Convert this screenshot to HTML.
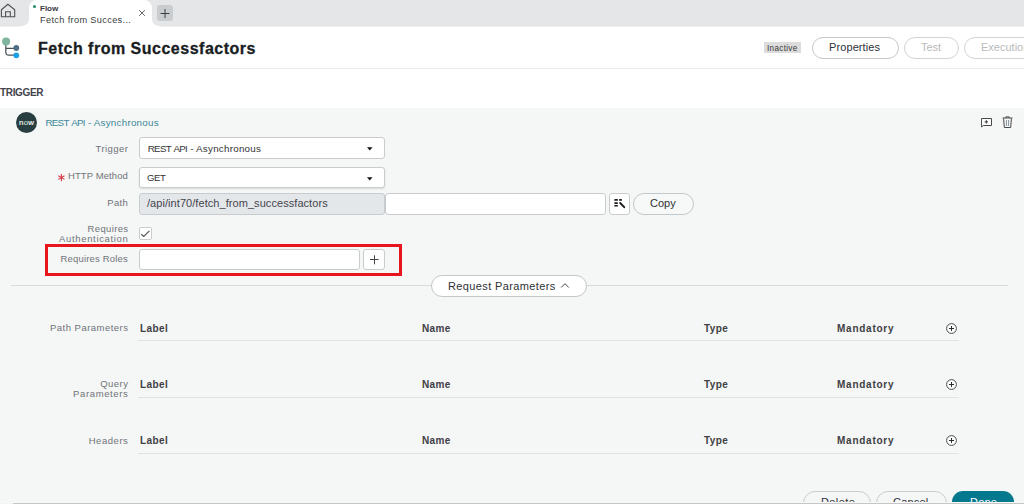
<!DOCTYPE html>
<html><head><meta charset="utf-8">
<style>
*{box-sizing:border-box;margin:0;padding:0}
html,body{width:1024px;height:504px;overflow:hidden;background:#fff;font-family:"Liberation Sans",sans-serif}
.a{position:absolute}
.t{position:absolute;white-space:nowrap;line-height:1}
#topbar{left:0;top:0;width:1024px;height:27px;background:#e4e6e7;border-bottom:1px solid #f0f1f2}
#tab{left:29px;top:0;width:123px;height:28px;background:#fff;border-radius:8px 8px 0 0}
#hdr{left:0;top:27px;width:1024px;height:42px;background:#fff;border-bottom:1px solid #e9ebea}
#panel{left:0;top:108px;width:1024px;height:396px;background:#f5f6f6}
.lbl{color:#6f7478;font-size:9.5px;text-align:right}
.inp{position:absolute;background:#fff;border:1px solid #c9cccf;border-radius:3px}
.pill{position:absolute;border:1px solid #c3c8ca;border-radius:12px;background:#fff}
.th{color:#404044;font-size:10px;font-weight:bold;letter-spacing:0.4px}
.hl{position:absolute;height:1px;background:#e0e2e3}
</style></head><body>
<div id="topbar" class="a"></div>
<!-- inverted corners -->
<div class="a" style="left:21px;top:18px;width:8px;height:9px;background:#fff"></div>
<div class="a" style="left:13px;top:10px;width:16px;height:16px;background:#e4e6e7;border-radius:0 0 7px 0"></div>
<div class="a" style="left:152px;top:18px;width:8px;height:9px;background:#fff"></div>
<div class="a" style="left:152px;top:10px;width:16px;height:16px;background:#e4e6e7;border-radius:0 0 0 7px"></div>
<div id="tab" class="a"></div>
<!-- home icon -->
<svg class="a" style="left:0;top:0" width="18" height="20" viewBox="0 0 18 20">
 <path d="M1.4 16.8 V9.8 L7.9 4.3 L14.7 9.8 V16.8 Z" fill="none" stroke="#4b4f52" stroke-width="1.1"/>
 <path d="M5.6 16.8 V11.7 H10.3 V16.8" fill="none" stroke="#4b4f52" stroke-width="1.1"/>
</svg>
<div class="a" style="left:33px;top:5px;width:3px;height:3px;border-radius:50%;background:#1d8a6c"></div>
<div class="t" style="left:40px;top:5px;font-size:8px;font-weight:bold;color:#3a3a44">Flow</div>
<div class="t" style="left:40px;top:16px;font-size:9.2px;color:#3a3d40;letter-spacing:0.35px">Fetch from Succes...</div>
<svg class="a" style="left:138px;top:9px" width="8" height="8" viewBox="0 0 8 8"><path d="M1.2 1.2 L6.8 6.8 M6.8 1.2 L1.2 6.8" stroke="#555" stroke-width="0.9"/></svg>
<div class="a" style="left:157px;top:5px;width:16px;height:16px;background:#c9cdd0;border-radius:3px"></div>
<svg class="a" style="left:157px;top:5px" width="16" height="16" viewBox="0 0 16 16"><path d="M8 4 V13 M3.5 8.5 H12.5" stroke="#3c4043" stroke-width="1"/></svg>

<div id="hdr" class="a"></div>
<!-- flow icon -->
<svg class="a" style="left:0;top:34px" width="24" height="26" viewBox="0 0 24 26">
 <path d="M5.8 8 V18 Q5.8 21.2 9 21.2 H15 M5.8 14.3 H15" fill="none" stroke="#4b5157" stroke-width="1.25"/>
 <circle cx="6.1" cy="7.6" r="4" fill="#7fb59c"/>
 <circle cx="16.3" cy="14" r="2.9" fill="#4f6f88"/>
 <circle cx="16.3" cy="21.3" r="2.9" fill="#1fa0e3"/>
</svg>
<div class="t" style="left:38px;top:40.5px;font-size:16px;font-weight:bold;color:#1a1d22;letter-spacing:0.5px;-webkit-text-stroke:0.3px #1a1d22">Fetch from Successfactors</div>
<div class="a" style="left:764px;top:42px;width:37px;height:11px;background:#dcdcdc"></div>
<div class="t" style="left:767px;top:44.5px;font-size:8.2px;color:#3a3a3a;letter-spacing:0.3px">Inactive</div>
<div class="pill" style="left:812px;top:37px;width:87px;height:22px;border-radius:11px"></div>
<div class="t" style="left:829px;top:42px;letter-spacing:0.1px;font-size:11px;color:#2e3236">Properties</div>
<div class="pill" style="left:904px;top:37px;width:55px;height:22px;border-radius:11px;border-color:#d0d4d6"></div>
<div class="t" style="left:921px;top:42px;font-size:11px;color:#b8babc">Test</div>
<div class="pill" style="left:964px;top:37px;width:90px;height:22px;border-radius:11px;border-color:#d0d4d6"></div>
<div class="t" style="left:981px;top:42px;font-size:11px;color:#b8babc">Execution</div>

<div class="t" style="left:0;top:87.5px;font-size:10px;font-weight:bold;color:#44444c;letter-spacing:-0.35px">TRIGGER</div>

<div id="panel" class="a"></div>
<div class="a" style="left:16px;top:112px;width:21px;height:21px;border-radius:50%;background:#293e40"></div>
<div class="t" style="left:19px;top:118.5px;font-size:7.8px;color:#f2f2f2;letter-spacing:0.3px;-webkit-text-stroke:0.2px #f2f2f2">n<span style="color:#7fc29b">o</span>w</div>
<div class="t" style="left:45.5px;top:117.5px;font-size:9.8px;color:#3c8899"><span style="letter-spacing:-0.75px;word-spacing:1.3px">REST API - </span><span style="letter-spacing:0.25px">Asynchronous</span></div>
<svg class="a" style="left:980px;top:117px" width="14" height="12" viewBox="0 0 14 12">
 <path d="M1.5 1.5 H11.5 V8.5 H3.2 L1.6 10 Z" fill="#fff" stroke="#4a4a4a" stroke-width="1" stroke-linejoin="round"/>
 <path d="M6.3 3.2 V6.6 M4.6 4.9 H8" stroke="#333" stroke-width="1"/>
</svg>
<svg class="a" style="left:1002px;top:116px" width="12" height="13" viewBox="0 0 12 13">
 <path d="M0.5 2 H10.5 M3.8 2 V0.9 H7.2 V2" fill="none" stroke="#4a4a4a" stroke-width="1"/>
 <path d="M1.6 2.5 L2.3 11.5 H8.7 L9.4 2.5" fill="none" stroke="#4a4a4a" stroke-width="1"/>
 <path d="M4.4 4 V10 M6.6 4 V10" stroke="#6a7a88" stroke-width="0.8"/>
</svg>

<!-- form -->
<div class="t lbl" style="right:895.6px;top:144px;letter-spacing:0.45px">Trigger</div>
<div class="inp" style="left:139px;top:137px;width:246px;height:22px"></div>
<div class="t" style="left:147.8px;top:144px;font-size:9.8px;color:#333"><span style="letter-spacing:-0.75px;word-spacing:1.3px">REST API - </span><span style="letter-spacing:0.25px">Asynchronous</span></div>
<svg class="a" style="left:366.5px;top:146.5px" width="6" height="4" viewBox="0 0 6 4"><path d="M0 0.3 H5.5 L2.75 3.4 Z" fill="#111"/></svg>

<svg class="a" style="left:56px;top:172px" width="11" height="11" viewBox="0 0 11 11"><path d="M5.4 1.9 V9.2 M2.3 3.7 L8.5 7.4 M2.3 7.4 L8.5 3.7" stroke="#d63a42" stroke-width="1.1"/></svg>
<div class="t lbl" style="right:896px;top:171.4px;letter-spacing:0.1px">HTTP Method</div>
<div class="inp" style="left:139px;top:167px;width:246px;height:21px;box-shadow:0 1px 2px rgba(0,0,0,.12)"></div>
<div class="t" style="left:147px;top:172.5px;font-size:9.6px;color:#333;letter-spacing:-0.4px">GET</div>
<svg class="a" style="left:366.5px;top:176.5px" width="6" height="4" viewBox="0 0 6 4"><path d="M0 0.3 H5.5 L2.75 3.4 Z" fill="#111"/></svg>

<div class="t lbl" style="right:895.8px;top:198px;letter-spacing:0.35px">Path</div>
<div class="inp" style="left:139px;top:193px;width:246px;height:22px;background:#e4e7ea"></div>
<div class="t" style="left:147px;top:198px;font-size:11px;color:#45454d;letter-spacing:0.06px">/api/int70/fetch_from_successfactors</div>
<div class="inp" style="left:385px;top:193px;width:221px;height:22px"></div>
<div class="inp" style="left:609px;top:193px;width:21px;height:22px"></div>
<svg class="a" style="left:608px;top:192px" width="24" height="24" viewBox="0 0 24 24">
 <g fill="#1b1b1b"><rect x="6.2" y="7.1" width="3.8" height="1.7" rx="0.85"/><rect x="6.2" y="10.2" width="3.8" height="1.7" rx="0.85"/><rect x="6.2" y="12.9" width="3.8" height="1.7" rx="0.85"/><rect x="11" y="7.1" width="3" height="1.7" rx="0.85"/></g>
 <path d="M12.2 11 L16.2 15.2" stroke="#1b1b1b" stroke-width="1.9" stroke-linecap="round"/>
</svg>
<div class="pill" style="left:633px;top:193px;width:61px;height:22px;border-radius:11px;background:#f7f8f8"></div>
<div class="t" style="left:650px;top:198px;font-size:11px;color:#2e3236">Copy</div>

<div class="t lbl" style="right:895.6px;top:224px;line-height:9.5px"><span style="letter-spacing:0.35px">Requires</span><br><span style="letter-spacing:0.65px">Authentication</span></div>
<div class="inp" style="left:139px;top:227px;width:13px;height:13px;border-radius:2px"></div>
<svg class="a" style="left:139px;top:227px" width="13" height="13" viewBox="0 0 13 13"><path d="M2.2 7.3 L4.8 9.4 L10.4 3.9" fill="none" stroke="#585858" stroke-width="1.3" stroke-linejoin="round"/></svg>

<div class="a" style="left:45px;top:244px;width:357px;height:32px;border:3px solid #e8151f"></div>
<div class="t lbl" style="right:896px;top:253.6px;letter-spacing:0.18px">Requires Roles</div>
<div class="inp" style="left:139px;top:249px;width:221px;height:21px"></div>
<div class="inp" style="left:363px;top:249px;width:22px;height:21px"></div>
<svg class="a" style="left:363px;top:249px" width="22" height="21" viewBox="0 0 22 21"><path d="M11.5 6.3 V15.3 M7 10.5 H15.6" stroke="#444" stroke-width="1"/></svg>

<div class="hl" style="left:11px;top:285px;width:997px;background:#d8dadb"></div>
<div class="pill" style="left:431px;top:275px;width:156px;height:22px;border-radius:11px;background:#fff"></div>
<div class="t" style="left:448px;top:281px;font-size:11px;letter-spacing:0.37px;color:#2e3236">Request Parameters</div>
<svg class="a" style="left:560px;top:282px" width="10" height="7" viewBox="0 0 10 7"><path d="M1.2 5.5 L5 1.7 L8.8 5.5" fill="none" stroke="#3a3a3a" stroke-width="0.95"/></svg>

<!-- tables -->
<div class="t lbl" style="right:895.6px;top:323.2px;letter-spacing:0.47px">Path Parameters</div>
<div class="t th" style="left:140px;top:324px">Label</div>
<div class="t th" style="left:422px;top:324px">Name</div>
<div class="t th" style="left:704px;top:324px">Type</div>
<div class="t th" style="letter-spacing:0.75px;left:837px;top:324px">Mandatory</div>
<div class="hl" style="left:138px;top:340px;width:821px"></div>
<svg class="a" style="left:945px;top:322px" width="12" height="12" viewBox="0 0 12 12"><circle cx="6.5" cy="6.5" r="4.9" fill="#fff" stroke="#4a4a4a" stroke-width="1"/><path d="M6.5 4 V9 M4 6.5 H9" stroke="#2a2a2a" stroke-width="1"/></svg>

<div class="t lbl" style="right:895.6px;top:378.5px;line-height:10px"><span style="letter-spacing:0.45px">Query</span><br><span style="letter-spacing:0.62px">Parameters</span></div>
<div class="t th" style="left:140px;top:380px">Label</div>
<div class="t th" style="left:422px;top:380px">Name</div>
<div class="t th" style="left:704px;top:380px">Type</div>
<div class="t th" style="letter-spacing:0.75px;left:837px;top:380px">Mandatory</div>
<div class="hl" style="left:138px;top:397px;width:821px"></div>
<svg class="a" style="left:945px;top:378px" width="12" height="12" viewBox="0 0 12 12"><circle cx="6.5" cy="6.5" r="4.9" fill="#fff" stroke="#4a4a4a" stroke-width="1"/><path d="M6.5 4 V9 M4 6.5 H9" stroke="#2a2a2a" stroke-width="1"/></svg>

<div class="t lbl" style="right:895.6px;top:435.6px;letter-spacing:0.55px">Headers</div>
<div class="t th" style="left:140px;top:436px">Label</div>
<div class="t th" style="left:422px;top:436px">Name</div>
<div class="t th" style="left:704px;top:436px">Type</div>
<div class="t th" style="letter-spacing:0.75px;left:837px;top:436px">Mandatory</div>
<div class="hl" style="left:138px;top:453px;width:821px"></div>
<svg class="a" style="left:945px;top:434px" width="12" height="12" viewBox="0 0 12 12"><circle cx="6.5" cy="6.5" r="4.9" fill="#fff" stroke="#4a4a4a" stroke-width="1"/><path d="M6.5 4 V9 M4 6.5 H9" stroke="#2a2a2a" stroke-width="1"/></svg>

<!-- bottom buttons -->
<div class="a" style="left:0;top:480px;width:1024px;height:22px;overflow:hidden">
<div class="pill" style="left:803px;top:11px;width:68px;height:24px;background:#f5f6f6;border-color:#c9cdcf"></div>
<div class="t" style="left:821px;top:17px;font-size:11px;color:#2e3236;letter-spacing:0.4px">Delete</div>
<div class="pill" style="left:876px;top:11px;width:71px;height:24px;background:#f5f6f6;border-color:#c9cdcf"></div>
<div class="t" style="left:893px;top:17px;font-size:11px;color:#2e3236;letter-spacing:0.2px">Cancel</div>
<div class="a" style="left:952px;top:11px;width:62px;height:24px;border-radius:11px;background:#04788d"></div>
<div class="t" style="left:970px;top:17px;font-size:11px;color:#fff;letter-spacing:0.2px">Done</div>
</div>
<div class="a" style="left:0;top:502px;width:1024px;height:1px;background:#f8f8f8"></div>
<div class="a" style="left:0;top:503px;width:1024px;height:1px;background:#f3f3f3"></div>
<div class="a" style="left:13px;top:503px;width:1011px;height:1px;background:#c6c6c6"></div>
</body></html>
